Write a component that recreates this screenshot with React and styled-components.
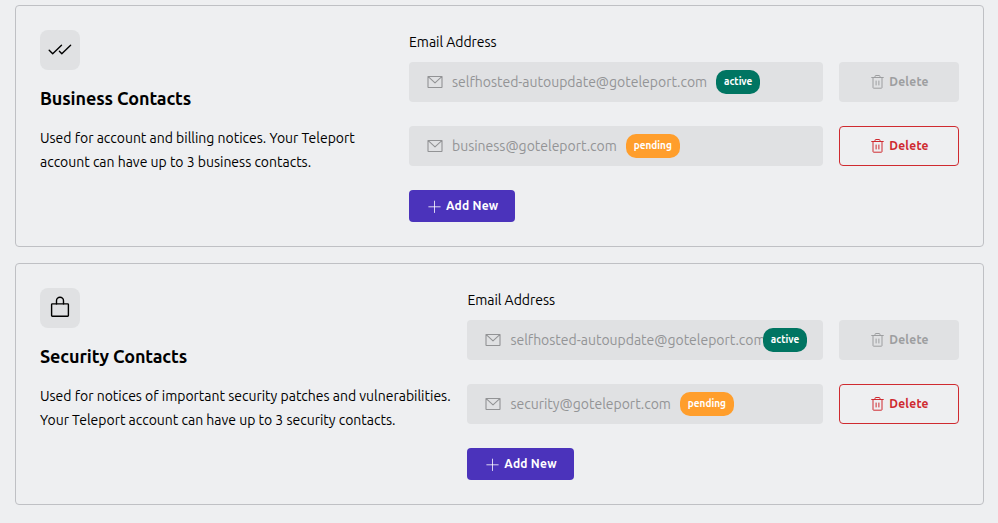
import React from 'react';
import styled, { createGlobalStyle, css } from 'styled-components';

const GlobalStyle = createGlobalStyle`
  *, *::before, *::after { box-sizing: border-box; }
  body {
    margin: 0;
    background: #eeeff1;
    color: #000;
    font-family: Ubuntu, "Noto Sans", sans-serif;
  }
  h2, p { margin: 0; }
  button { font-family: inherit; margin: 0; }
  svg { display: block; flex: none; }
`;

const Page = styled.main`
  display: flex;
  flex-direction: column;
  gap: 16px;
  width: 998px;
  height: 523px;
  padding: 5px 14px 0 15px;
`;

const Card = styled.section`
  display: grid;
  grid-template-columns: ${p => p.$intro}px minmax(0, 1fr);
  height: 242px;
  padding: 24px;
  border: 1px solid #bfc0c4;
  border-radius: 4px;
`;

const Intro = styled.div`
  display: flex;
  flex-direction: column;
  gap: 16px;
`;

const IconTile = styled.div`
  width: 40px;
  height: 40px;
  border-radius: 8px;
  background: #e0e1e3;
`;

const Title = styled.h2`
  font-size: 18px;
  line-height: 24px;
  font-weight: 600;
  letter-spacing: -0.12px;
  white-space: nowrap;
`;

const Description = styled.p`
  font-size: 14px;
  line-height: 24px;
  letter-spacing: -0.015px;
`;

const Line = styled.span`
  display: block;
  white-space: nowrap;
`;

const Contacts = styled.div`
  display: flex;
  flex-direction: column;
  align-items: stretch;
`;

const Label = styled.div`
  margin-bottom: 8px;
  font-size: 14px;
  line-height: 24px;
  letter-spacing: -0.03px;
`;

const ContactRow = styled.div`
  display: grid;
  grid-template-columns: minmax(0, 1fr) 120px;
  gap: 16px;
  height: 40px;
  margin-bottom: 24px;
`;

const Field = styled.div`
  display: flex;
  align-items: center;
  min-width: 0;
  padding: 0 16px 0 18px;
  border-radius: 4px;
  background: #e0e1e3;
  color: #929395;
`;

const Email = styled.span`
  flex: 0 1 auto;
  min-width: 0;
  margin-left: 9px;
  padding-right: 9px;
  overflow: hidden;
  white-space: nowrap;
  font-size: 14px;
  line-height: 24px;
  letter-spacing: -0.015px;
  color: #939496;
`;

const Badge = styled.span`
  flex: none;
  width: ${p => (p.$status === 'active' ? 44 : 54)}px;
  height: 24px;
  border-radius: 10px;
  background: ${p => (p.$status === 'active' ? '#007562' : '#ff9e2c')};
  color: #fff;
  font-size: 10px;
  line-height: 23px;
  font-weight: 700;
  text-align: center;
`;

const buttonBase = css`
  display: flex;
  align-items: center;
  justify-content: center;
  gap: 5px;
  padding: 0 0 0 2px;
  border-radius: 4px;
  font-size: 12px;
  line-height: 16px;
  font-weight: 700;
  letter-spacing: 0.24px;
  white-space: nowrap;
`;

const DeleteButton = styled.button`
  ${buttonBase}
  border: 1px solid #cf2a30;
  background: transparent;
  color: #cf2a30;

  &:disabled {
    border: 0;
    background: #e0e1e3;
    color: #9d9ea0;
  }
`;

const AddButton = styled.button`
  ${buttonBase}
  align-self: flex-start;
  width: 106.4px;
  height: 32px;
  border: 0;
  background: #4b33bb;
  color: #fff;
`;

const Checks = () => (
  <svg width="40" height="40" fill="none" stroke="#000" strokeWidth="1.4" strokeLinecap="round" strokeLinejoin="round">
    <path d="M9.2 20.2 12.7 23.7 21.5 15.2M19.4 21.3 21.8 23.7 30.6 15.2" />
  </svg>
);

const Lock = () => (
  <svg width="40" height="40" fill="none" stroke="#000" strokeWidth="1.4" strokeLinecap="round" strokeLinejoin="round">
    <rect x="11.6" y="15.9" width="16.8" height="12.3" rx="0.7" />
    <path d="M16.5 15.9V12.8a3.5 3.5 0 0 1 7 0V15.9" />
  </svg>
);

const Envelope = () => (
  <svg width="16" height="16" fill="none" stroke="currentColor" strokeWidth="1.1" strokeLinecap="round" strokeLinejoin="round">
    <path d="M1 2.5H15V12.9a.6.6 0 0 1-.6.6H1.6a.6.6 0 0 1-.6-.6ZM1.2 2.7 8 8.9 14.8 2.7" />
  </svg>
);

const Trash = () => (
  <svg width="13" height="14" fill="none" stroke="currentColor" strokeWidth="1" strokeLinecap="round" strokeLinejoin="round">
    <path d="M.7 2.5H12.3M2 2.5V12.6a.6.6 0 0 0 .6.6H10.4a.6.6 0 0 0 .6-.6V2.5M4 2.4V1.4A.9.9 0 0 1 4.9.5H8.1A.9.9 0 0 1 9 1.4V2.4M5.1 6V10M7.9 6V10" />
  </svg>
);

const Plus = () => (
  <svg width="13" height="13" fill="none" stroke="currentColor" strokeWidth="0.8" strokeLinecap="round">
    <path d="M.8 6.8H12.2M6.5 1.1V12.5" />
  </svg>
);

const groups = [
  {
    title: 'Business Contacts',
    icon: <Checks />,
    intro: 369,
    lines: [
      'Used for account and billing notices. Your Teleport',
      'account can have up to 3 business contacts.',
    ],
    contacts: [
      { email: 'selfhosted-autoupdate@goteleport.com', status: 'active' },
      { email: 'business@goteleport.com', status: 'pending' },
    ],
  },
  {
    title: 'Security Contacts',
    icon: <Lock />,
    intro: 427.4,
    lines: [
      'Used for notices of important security patches and vulnerabilities.',
      'Your Teleport account can have up to 3 security contacts.',
    ],
    contacts: [
      { email: 'selfhosted-autoupdate@goteleport.com', status: 'active' },
      { email: 'security@goteleport.com', status: 'pending' },
    ],
  },
];

export default function App() {
  return (
    <>
      <GlobalStyle />
      <Page>
        {groups.map(group => (
          <Card key={group.title} $intro={group.intro}>
            <Intro>
              <IconTile>{group.icon}</IconTile>
              <Title>{group.title}</Title>
              <Description>
                {group.lines.map(text => <Line key={text}>{text}</Line>)}
              </Description>
            </Intro>
            <Contacts>
              <Label>Email Address</Label>
              {group.contacts.map(({ email, status }) => (
                <ContactRow key={email}>
                  <Field>
                    <Envelope />
                    <Email>{email}</Email>
                    <Badge $status={status}>{status}</Badge>
                  </Field>
                  <DeleteButton type="button" disabled={status === 'active'}>
                    <Trash />
                    Delete
                  </DeleteButton>
                </ContactRow>
              ))}
              <AddButton type="button">
                <Plus />
                Add New
              </AddButton>
            </Contacts>
          </Card>
        ))}
      </Page>
    </>
  );
}
